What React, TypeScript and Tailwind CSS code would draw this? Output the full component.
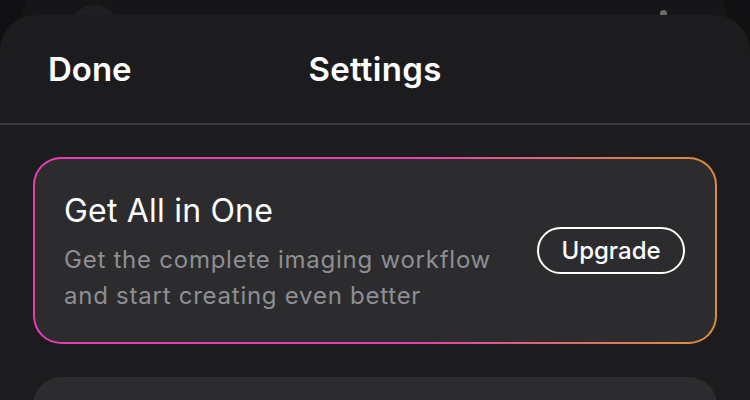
import React from "react";

export default function App() {
  return (
    <div
      className="relative h-[400px] w-[750px] overflow-hidden bg-[#111113]"
      style={{ fontFamily: 'Inter, "Noto Sans", sans-serif' }}
    >
      {/* stacked layer behind the sheet */}
      <div className="absolute left-[22px] right-[22px] top-[-20px] h-[80px] rounded-t-[40px] bg-[#161618]" />
      <div className="absolute left-[70px] top-[5px] h-[48px] w-[48px] rounded-full bg-[#1f1f21]" />
      <div className="absolute left-[660px] top-[10px] h-[7px] w-[7px] rounded-full bg-[#6c6c6e]" />

      <div className="relative mt-[15px] flex h-[400px] flex-col rounded-t-[36px] bg-[#1c1c1e]">
        <div className="relative flex h-[108px] shrink-0 items-center px-[48px]">
          <span className="text-[33px] font-semibold leading-[40px] text-white">Done</span>
          <span className="absolute left-0 right-0 text-center text-[33px] font-semibold leading-[40px] tracking-[0.3px] text-white">
            Settings
          </span>
        </div>
        <div className="h-[2px] shrink-0 bg-[#3b3b3e]" />

        <div className="shrink-0 px-[33px] pt-[32px]">
          <div className="rounded-[28px] bg-[linear-gradient(90deg,#e63db6_0%,#e53fb0_55%,#dd8a3a_95%)] p-[2px]">
            <div className="flex h-[183px] items-center justify-between rounded-[26px] bg-[#2c2c2e] pl-[29px] pr-[30px]">
              <div className="flex flex-col pt-[4px]">
                <div className="text-[32px] font-normal leading-[40px] tracking-[0.2px] text-white">Get All in One</div>
                <div className="mt-[11px] text-[24px] leading-[36px] tracking-[0.75px] text-[#8e8e93]">
                  Get the complete imaging workflow
                  <br />
                  and start creating even better
                </div>
              </div>
              <button className="flex h-[47px] w-[148px] items-center justify-center rounded-full border-2 border-white text-[24px] font-medium text-white">
                Upgrade
              </button>
            </div>
          </div>

          <div className="mt-[33px] h-[120px] rounded-[28px] bg-[#2c2c2e]" />
        </div>
      </div>
    </div>
  );
}
